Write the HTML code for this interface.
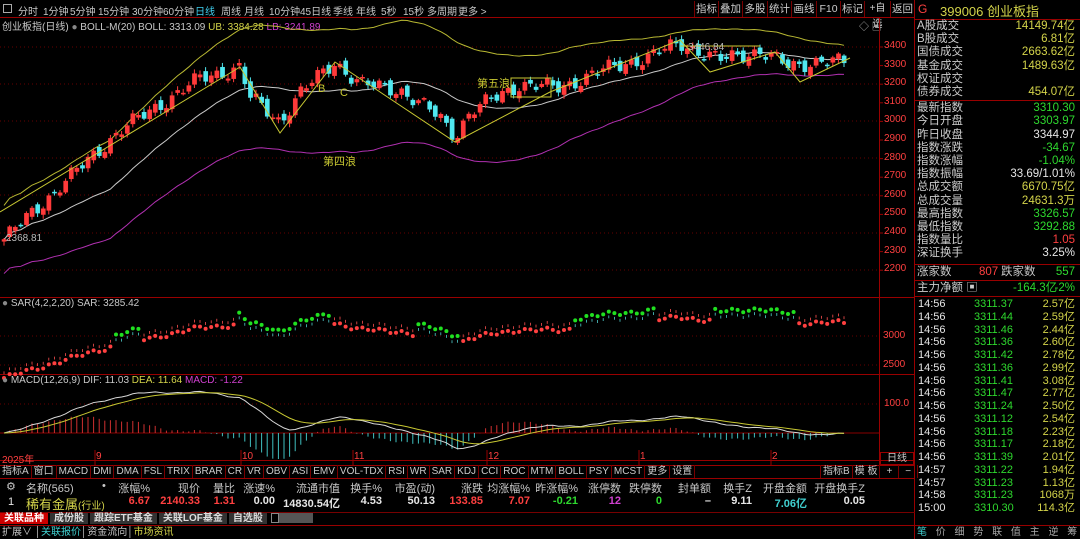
<!DOCTYPE html>
<html><head><meta charset="utf-8">
<style>
*{margin:0;padding:0;box-sizing:border-box}
body{width:1080px;height:539px;background:#000;overflow:hidden;position:relative;font-family:"Liberation Sans","Noto Sans CJK SC",sans-serif;font-size:11px;color:#c8c8c8}
.a{position:absolute;white-space:nowrap}
.r{text-align:right}
.btn{position:absolute;top:1px;height:16px;border-left:1px solid #700;line-height:16px;font-size:10.5px;color:#ccc;text-align:center}
.row{position:absolute;left:917px;width:160px;height:13px;line-height:13px;font-size:11.5px}
.row .l{position:absolute;left:0;color:#ccc}
.row .v{position:absolute;right:2px}
.t{position:absolute;left:917px;width:160px;height:13px;line-height:13px;font-size:11px}
.y{color:#d4d44a}.g{color:#2ed82e}.rd{color:#ff4040}.w{color:#e6e6e6}.c{color:#40d0d0}.m{color:#d040d0}
.bar{position:absolute;top:465px;height:13px;line-height:13px;font-size:10px;display:flex}
.bar span{border-right:1px solid #700;padding:0 2px;color:#ccc}
.tb span{position:absolute;top:0}
</style></head><body>
<div class="a" style="left:0;top:0;width:915px;height:18px;border-bottom:1px solid #900"></div>
<div class="a" style="left:3px;top:4px;width:9px;height:9px;border:1px solid #aaa"></div>
<div class="a tb" style="top:3px;left:18px;font-size:10px">
<span style="left:0">分时</span><span style="left:25px">1分钟</span><span style="left:52px">5分钟</span><span style="left:80px">15分钟</span><span style="left:114px">30分钟</span><span style="left:145px">60分钟</span><span style="left:177px;color:#40d0f0">日线</span><span style="left:203px">周线</span><span style="left:226px">月线</span><span style="left:251px">10分钟</span><span style="left:282px">45日线</span><span style="left:315px">季线</span><span style="left:338px">年线</span><span style="left:363px">5秒</span><span style="left:385px">15秒</span><span style="left:409px">多周期</span><span style="left:440px">更多 &gt;</span></div>
<div class="btn" style="left:694px;width:24px">指标</div><div class="btn" style="left:718px;width:24px">叠加</div><div class="btn" style="left:742px;width:25px">多股</div><div class="btn" style="left:767px;width:24px">统计</div><div class="btn" style="left:791px;width:25px">画线</div><div class="btn" style="left:816px;width:24px">F10</div><div class="btn" style="left:840px;width:24px">标记</div><div class="btn" style="left:864px;width:26px;font-size:10px">+自选</div><div class="btn" style="left:890px;width:25px;border-right:1px solid #700">返回</div>
<div class="a" style="left:2px;top:18px;font-size:10px">创业板指(日线) <span style="color:#888">●</span> BOLL-M(20) BOLL: 3313.09 <span class="y">UB: 3384.28</span> <span class="m">LB: 3241.89</span></div>
<div class="a" style="left:859px;top:18px;color:#aaa;font-size:10px">◇ ▣</div>
<div class="a" style="left:879px;top:18px;width:1px;height:447px;background:#900"></div>
<div class="a" style="left:914px;top:0;width:1px;height:539px;background:#900"></div>
<div class="a" style="left:0;top:297px;width:914px;height:1px;background:#900"></div>
<div class="a" style="left:0;top:374px;width:914px;height:1px;background:#900"></div>
<div class="a" style="left:0;top:460px;width:914px;height:1px;background:#900"></div>
<svg class="a" style="left:0;top:0" width="915" height="539" id="sv"></svg>
<div class="a" style="left:2px;top:298px;font-size:10px"><span style="color:#888">●</span> SAR(4,2,2,20) SAR: 3285.42</div>
<div class="a" style="left:2px;top:375px;font-size:10px"><span style="color:#888">●</span> MACD(12,26,9) DIF: 11.03 <span class="y">DEA: 11.64</span> <span class="m">MACD: -1.22</span></div>
<div id="ax"></div>
<div class="a rd" style="left:883px;top:330px;font-size:10px">3000</div>
<div class="a rd" style="left:883px;top:359px;font-size:10px">2500</div>
<div class="a rd" style="left:884px;top:398px;font-size:10px">100.0</div>
<div class="a rd" style="left:2px;top:451px;font-size:10px">2025年</div>
<div class="a rd" style="left:96px;top:451px;font-size:10px">9</div>
<div class="a rd" style="left:242px;top:451px;font-size:10px">10</div>
<div class="a rd" style="left:354px;top:451px;font-size:10px">11</div>
<div class="a rd" style="left:488px;top:451px;font-size:10px">12</div>
<div class="a rd" style="left:640px;top:451px;font-size:10px">1</div>
<div class="a rd" style="left:772px;top:451px;font-size:10px">2</div>
<div class="a" style="left:880px;top:452px;width:34px;height:13px;border:1px solid #900;text-align:center;font-size:10px;line-height:12px">日线</div>
<div class="a" style="left:0;top:465px;width:915px;height:1px;background:#900"></div>
<div class="bar" style="left:0">
<span>指标A</span><span>窗口</span><span class="c">MACD</span><span>DMI</span><span>DMA</span><span>FSL</span><span>TRIX</span><span>BRAR</span><span>CR</span><span>VR</span><span>OBV</span><span>ASI</span><span>EMV</span><span>VOL-TDX</span><span>RSI</span><span>WR</span><span>SAR</span><span>KDJ</span><span>CCI</span><span>ROC</span><span>MTM</span><span>BOLL</span><span>PSY</span><span>MCST</span><span>更多</span><span>设置</span></div>
<div class="bar" style="left:820px"><span style="border-left:1px solid #700">指标B</span><span>模 板</span><span style="padding:0 6px">+</span><span style="padding:0 6px">−</span></div>
<div class="a" style="left:0;top:478px;width:915px;height:1px;background:#900"></div>
<div id="tb"></div>
<div class="a" style="left:0;top:512px;width:915px;height:1px;background:#700"></div>
<div class="a" style="left:0;top:513px;height:12px;font-size:10px;line-height:12px;font-weight:bold">
<span style="background:#c00;color:#fff;padding:0 4px">关联品种</span><span style="background:#333;color:#ddd;padding:0 4px;margin-left:2px">成份股</span><span style="background:#333;color:#ddd;padding:0 4px;margin-left:2px">跟踪ETF基金</span><span style="background:#333;color:#ddd;padding:0 4px;margin-left:2px">关联LOF基金</span><span style="background:#333;color:#ddd;padding:0 4px;margin-left:2px">自选股</span><span style="display:inline-block;width:8px;height:10px;border:1px solid #888;margin-left:4px;vertical-align:middle"></span><span style="display:inline-block;width:34px;height:10px;background:#555;vertical-align:middle"></span></div>
<div class="a" style="left:0;top:525px;width:1080px;height:1px;background:#900"></div>
<div class="a" style="left:2px;top:526px;font-size:10px;line-height:13px">扩展∨ │<span class="c">关联报价</span>│资金流向│<span class="y">市场资讯</span></div>
<div class="a" style="left:917px;top:526px;font-size:10px;line-height:13px;word-spacing:6px;color:#aaa"><span class="c">笔</span> 价 细 势 联 值 主 逆 筹</div>
<div class="a" style="left:918px;top:2px;font-size:12px"><span class="rd">G</span></div>
<div class="a y" style="left:940px;top:1px;font-size:13px">399006 创业板指</div>
<div class="a" style="left:915px;top:19px;width:165px;height:1px;background:#900"></div>
<div id="rp"></div>
<script>
const ns="http://www.w3.org/2000/svg",sv=document.getElementById('sv');
function el(t,a){const e=document.createElementNS(ns,t);for(let k in a)e.setAttribute(k,a[k]);sv.appendChild(e);return e;}
function div(h){document.body.insertAdjacentHTML('beforeend',h);}
[47,84,121,158,195,233,270].forEach(y=>el('line',{x1:0,x2:879,y1:y,y2:y,stroke:'#600','stroke-dasharray':'1 3'}));
[336,365,404].forEach(y=>el('line',{x1:0,x2:879,y1:y,y2:y,stroke:'#600','stroke-dasharray':'1 3'}));
el('line',{x1:0,x2:879,y1:433,y2:433,stroke:'#800'});
let ax='';[3400,3300,3200,3100,3000,2900,2800,2700,2600,2500,2400,2300,2200].forEach((p,i)=>{const y=47+(3400-p)*0.186;ax+=`<div class="a rd" style="left:884px;top:${y-7}px;font-size:10px">${p}</div>`;el('line',{x1:879,x2:883,y1:y,y2:y,stroke:'#900'});});
div(ax);
[95,241,353,487,639,771].forEach(x=>el('line',{x1:x,x2:x,y1:450,y2:465,stroke:'#900'}));
const kp=[[3,2360],[60,2650],[120,2950],[200,3230],[240,3290],[250,3130],[280,3000],[300,3150],[335,3320],[360,3200],[400,3170],[440,3020],[455,2920],[470,3050],[520,3200],[560,3180],[600,3270],[650,3350],[680,3420],[720,3330],[760,3380],[790,3290],[820,3330],[850,3310]];
function pr(x){for(let i=1;i<kp.length;i++)if(x<=kp[i][0]){const a=kp[i-1],b=kp[i];return a[1]+(b[1]-a[1])*(x-a[0])/(b[0]-a[0]);}return 3310;}
const Y=p=>47+(3400-p)*0.186;
const N=151,cl=[],xs=[];
for(let i=0;i<N;i++){const x=4+i*5.6;xs.push(x);cl.push(pr(x)+Math.sin(i*1.7)*30+Math.sin(i*0.6)*18);}
const hwk=[[0,180],[100,260],[250,330],[400,330],[500,290],[600,230],[700,150],[850,75]];
function hw(x){for(let i=1;i<hwk.length;i++)if(x<=hwk[i][0]){const a=hwk[i-1],b=hwk[i];return a[1]+(b[1]-a[1])*(x-a[0])/(b[0]-a[0]);}return 75;}
const mid=[],up=[],lo=[];
for(let i=0;i<N;i++){const s=cl.slice(Math.max(0,i-19),i+1);const m=s.reduce((a,b)=>a+b,0)/s.length;const h=hw(xs[i]);mid.push(m);up.push(m+h);lo.push(m-h);}
const pl=(arr,c)=>el('polyline',{points:arr.map((v,i)=>xs[i]+','+Y(v)).join(' '),fill:'none',stroke:c,'stroke-width':1});
pl(up,'#b8b832');pl(mid,'#c8c8c8');pl(lo,'#b030b0');
for(let i=0;i<N;i++){const o=i?cl[i-1]+Math.sin(i*2.3)*20:cl[i]-10,c=cl[i];const hi=Math.max(o,c)+8+Math.abs(Math.sin(i*3.1))*15,lw=Math.min(o,c)-8-Math.abs(Math.cos(i*2.7))*15;const col=c>=o?'#ff3a3a':'#50e8f0';const x=xs[i];
el('line',{x1:x,x2:x,y1:Y(hi),y2:Y(lw),stroke:col});
const t=Y(Math.max(o,c)),h=Math.max(1,Y(Math.min(o,c))-t);
el('rect',{x:x-2,y:t,width:4.2,height:h,fill:col,stroke:col,'stroke-width':0.5});}
el('polyline',{points:'0,212 240,67 280,133 335,62 455,142 550,92 680,40 710,72 775,52 800,82 850,58',fill:'none',stroke:'#c8c832','stroke-width':1});
el('line',{x1:680,x2:760,y1:46,y2:46,stroke:'#c8c832'});
el('rect',{x:511,y:78,width:40,height:19,fill:'none',stroke:'#c8c832'});
const tx=(x,y,s,c,fs)=>{const e=el('text',{x:x,y:y,fill:c,'font-size':fs||11,'font-family':'Liberation Sans,Noto Sans CJK SC,sans-serif'});e.textContent=s;};
tx(318,92,'B','#c8c832');tx(340,96,'C','#c8c832');tx(477,87,'第五浪','#c8c832');tx(323,165,'第四浪','#c8c832');
tx(6,241,'2368.81','#bbb',10);tx(688,50,'3446.84','#bbb',10);
const YS=p=>336+(3000-p)*0.058;
for(let i=0;i<N;i++){const x=xs[i],c=cl[i];const tr=Math.sin(i*0.22)+Math.sin(i*0.09)*0.7>-0.2;const sar=tr?c-90:c+90;
el('circle',{cx:x,cy:YS(sar),r:2,fill:tr?'#ff4040':'#20e020'});
el('line',{x1:x,x2:x,y1:YS(c+25),y2:YS(c-25),stroke:tr?'#ff5050':'#50d0d0','stroke-width':0.8});}
let e12=cl[0],e26=cl[0],dea=0;const dif=[],de=[];
for(let i=0;i<N;i++){e12=e12+(cl[i]-e12)*2/13;e26=e26+(cl[i]-e26)*2/27;const d=e12-e26;dea=dea+(d-dea)*2/10;dif.push(d);de.push(dea);}
const YM=v=>433-v*0.28;
for(let i=0;i<N;i++){const h=(dif[i]-de[i])*2;el('line',{x1:xs[i],x2:xs[i],y1:433,y2:YM(h),stroke:h>0?'#d03030':'#40c0c0'});}
el('polyline',{points:dif.map((v,i)=>xs[i]+','+YM(v)).join(' '),fill:'none',stroke:'#d8d8d8'});
el('polyline',{points:de.map((v,i)=>xs[i]+','+YM(v)).join(' '),fill:'none',stroke:'#c8c832'});
const cols=[[150,'涨幅%','6.67','rd'],[200,'现价','2140.33','rd'],[235,'量比','1.31','rd'],[275,'涨速%','0.00','w'],[340,'流通市值','14830.54亿','w'],[382,'换手%','4.53','w'],[435,'市盈(动)','50.13','w'],[483,'涨跌','133.85','rd'],[530,'均涨幅%','7.07','rd'],[578,'昨涨幅%','-0.21','g'],[621,'涨停数','12','m'],[662,'跌停数','0','g'],[711,'封单额','–','w'],[752,'换手Z','9.11','w'],[807,'开盘金额','7.06亿','c'],[865,'开盘换手Z','0.05','w']];
let tb='<div class="a" style="left:6px;top:480px;font-size:11px">⚙</div><div class="a" style="left:26px;top:480px;font-size:11px">名称(565)</div><div class="a" style="left:102px;top:480px">•</div><div class="a w" style="left:8px;top:496px">1</div><div class="a y" style="left:26px;top:494px;font-size:13px">稀有金属<span style="font-size:10px">(行业)</span></div>';
cols.forEach(c=>{tb+=`<div class="a r" style="right:${1080-c[0]}px;top:480px;font-size:11px">${c[1]}</div><div class="a r ${c[3]}" style="right:${1080-c[0]}px;top:495px;font-size:11px;font-weight:bold">${c[2]}</div>`;});
div(tb);
const rows=[['A股成交','14149.74亿','y'],['B股成交','6.81亿','y'],['国债成交','2663.62亿','y'],['基金成交','1489.63亿','y'],['权证成交','',''],['债券成交','454.07亿','y'],null,['最新指数','3310.30','g'],['今日开盘','3303.97','g'],['昨日收盘','3344.97','w'],['指数涨跌','-34.67','g'],['指数涨幅','-1.04%','g'],['指数振幅','33.69/1.01%','w'],['总成交额','6670.75亿','y'],['总成交量','24631.3万','y'],['最高指数','3326.57','g'],['最低指数','3292.88','g'],['指数量比','1.05','rd'],['深证换手','3.25%','w']];
let rp='';let y=20;rows.forEach(r=>{if(!r){rp+='<div class="a" style="left:915px;top:'+(y+1)+'px;width:165px;height:1px;background:#900"></div>';y+=3;return;}rp+=`<div class="row" style="top:${y}px"><span class="l">${r[0]}</span><span class="v ${r[2]}">${r[1]}</span></div>`;y+=13.2;});
rp+='<div class="a" style="left:915px;top:264px;width:165px;height:1px;background:#900"></div>';
rp+='<div class="row" style="top:266px"><span class="l">涨家数</span><span class="a rd" style="left:62px">807</span><span class="a" style="left:84px">跌家数</span><span class="v g">557</span></div>';
rp+='<div class="a" style="left:915px;top:280px;width:165px;height:1px;background:#900"></div>';
rp+='<div class="row" style="top:282px"><span class="l">主力净额 ▣</span><span class="a g" style="left:96px">-164.3亿</span><span class="v g">-2%</span></div>';
rp+='<div class="a" style="left:915px;top:296px;width:165px;height:1px;background:#900"></div>';
const tk=[['14:56','3311.37','2.57亿'],['14:56','3311.44','2.59亿'],['14:56','3311.46','2.44亿'],['14:56','3311.36','2.60亿'],['14:56','3311.42','2.78亿'],['14:56','3311.36','2.99亿'],['14:56','3311.41','3.08亿'],['14:56','3311.47','2.77亿'],['14:56','3311.24','2.50亿'],['14:56','3311.12','2.54亿'],['14:56','3311.18','2.23亿'],['14:56','3311.17','2.18亿'],['14:56','3311.39','2.01亿'],['14:57','3311.22','1.94亿'],['14:57','3311.23','1.13亿'],['14:58','3311.23','1068万'],['15:00','3310.30','114.3亿']];
tk.forEach((t,i)=>{rp+=`<div class="t" style="top:${298+i*12.75}px"><span class="a w" style="left:1px">${t[0]}</span><span class="a g" style="left:57px">${t[1]}</span><span class="a y" style="right:2px">${t[2]}</span></div>`;});
div(rp);
</script>
</body></html>
